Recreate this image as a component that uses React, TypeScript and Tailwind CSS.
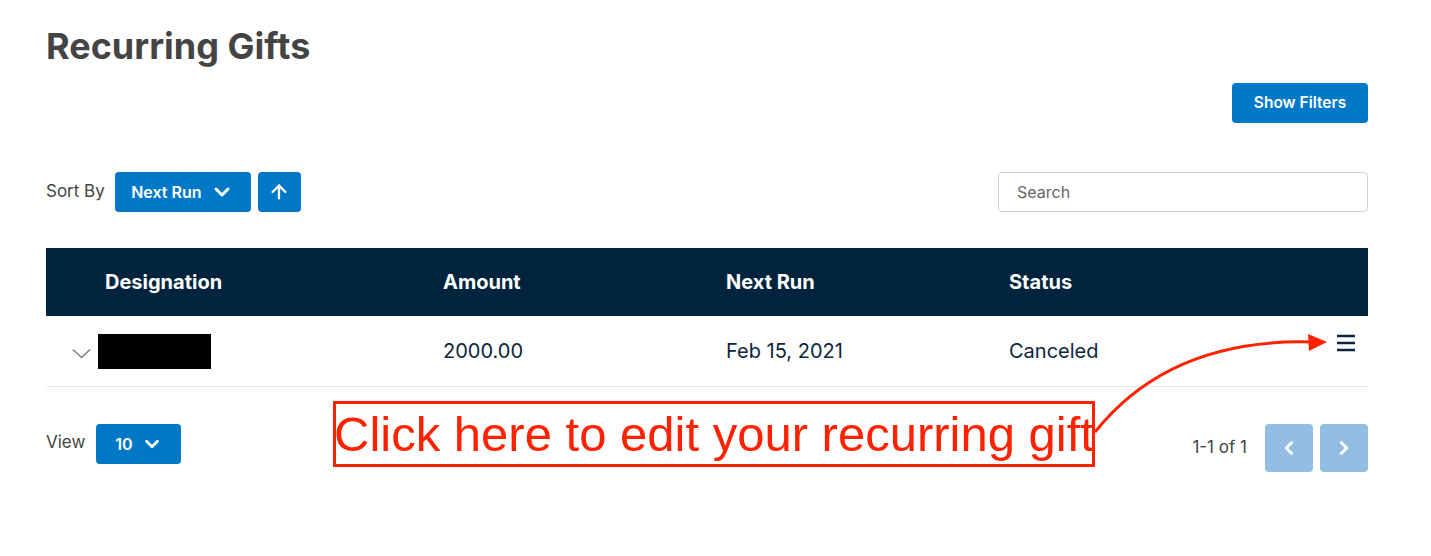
import { ChevronDown, ChevronLeft, ChevronRight, ArrowUp } from "lucide-react";

const FONT = "font-['Inter','Lato',sans-serif]";

function Hamburger() {
  return (
    <svg width="20" height="18" viewBox="0 0 20 18" className="text-[#0b2540]">
      <path d="M1 2h18M1 9h18M1 16h18" stroke="currentColor" strokeWidth="2.4" />
    </svg>
  );
}

function RowChevron() {
  return (
    <svg width="19" height="11" viewBox="0 0 19 11" className="text-[#808080]">
      <path d="M1 1.5l8.5 8 8.5-8" fill="none" stroke="currentColor" strokeWidth="1.6" />
    </svg>
  );
}

export default function App() {
  return (
    <div className={`relative h-[556px] w-[1431px] bg-white pl-[46px] pr-[63px] pt-[25px] ${FONT}`}>
      <h1 className="text-[36px] font-bold leading-[42px] text-[#444]">Recurring Gifts</h1>

      <div className="mt-[16px] flex justify-end">
        <button className="h-[40px] w-[136px] rounded-[4px] bg-[#0078c8] text-[15.5px] font-semibold text-white">
          Show Filters
        </button>
      </div>

      <div className="mt-[49px] flex items-center justify-between">
        <div className="flex items-center">
          <span className="mr-[10px] text-[17px] text-[#444]">Sort By</span>
          <button className="flex h-[40px] w-[136px] items-center justify-center gap-[9px] rounded-[4px] bg-[#0078c8] text-[16px] font-semibold text-white">
            Next Run
            <ChevronDown size={24} strokeWidth={3} />
          </button>
          <button className="ml-[7px] flex h-[40px] w-[43px] items-center justify-center rounded-[4px] bg-[#0078c8] text-white">
            <ArrowUp size={22} strokeWidth={2.5} />
          </button>
        </div>
        <div className="flex h-[40px] w-[370px] items-center rounded-[4px] border border-[#cfcfcf] px-[18px] text-[16px] text-[#666]">
          Search
        </div>
      </div>

      <div className="mt-[36px]">
        <div className="grid h-[68px] grid-cols-[397px_283px_283px_1fr] items-center bg-[#00243d] text-[20px] font-bold text-white">
          <div className="pl-[59px]">Designation</div>
          <div>Amount</div>
          <div>Next Run</div>
          <div>Status</div>
        </div>
        <div className="grid h-[71px] grid-cols-[397px_283px_283px_1fr] items-center border-b border-[#e8e8e8] text-[20px] text-[#0b2540]">
          <div className="flex items-center pl-[26px]">
            <span className="mt-[4px]">
              <RowChevron />
            </span>
            <div className="ml-[7px] h-[35px] w-[113px] bg-black" />
          </div>
          <div>2000.00</div>
          <div>Feb 15, 2021</div>
          <div className="flex items-center justify-between pr-[12px]">
            <span>Canceled</span>
            <span className="-mt-[16px]">
              <Hamburger />
            </span>
          </div>
        </div>
      </div>

      <div className="mt-[37px] flex items-start justify-between">
        <div className="flex h-[40px] items-center">
          <span className="-mt-[2px] mr-[11px] text-[17px] text-[#444]">View</span>
          <button className="flex h-[40px] w-[85px] items-center justify-center gap-[8px] rounded-[4px] bg-[#0078c8] text-[16px] font-semibold text-white">
            10
            <ChevronDown size={22} strokeWidth={3} />
          </button>
        </div>
        <div className="flex h-[48px] items-center">
          <span className="mr-[18px] text-[17px] text-[#444]">1-1 of 1</span>
          <button className="flex h-[48px] w-[48px] items-center justify-center rounded-[4px] bg-[#93bde2] text-white">
            <ChevronLeft size={22} strokeWidth={3} />
          </button>
          <button className="ml-[7px] flex h-[48px] w-[48px] items-center justify-center rounded-[4px] bg-[#93bde2] text-white">
            <ChevronRight size={22} strokeWidth={3} />
          </button>
        </div>
      </div>

      {/* annotation overlay */}
      <div className="absolute left-[333px] top-[401px] flex h-[66px] w-[762px] items-center justify-center whitespace-nowrap border-[3px] border-[#ff2200] font-['Liberation_Sans',Arial,sans-serif] text-[49px] leading-none text-[#ff2200]">
        Click here to edit your recurring gift
      </div>
      <svg className="pointer-events-none absolute left-0 top-0" width="1431" height="556">
        <path d="M1095 432 Q1170 338 1312 342" fill="none" stroke="#ff2200" strokeWidth="3" />
        <polygon points="1327,342 1308,334 1309,351" fill="#ff2200" />
      </svg>
    </div>
  );
}
